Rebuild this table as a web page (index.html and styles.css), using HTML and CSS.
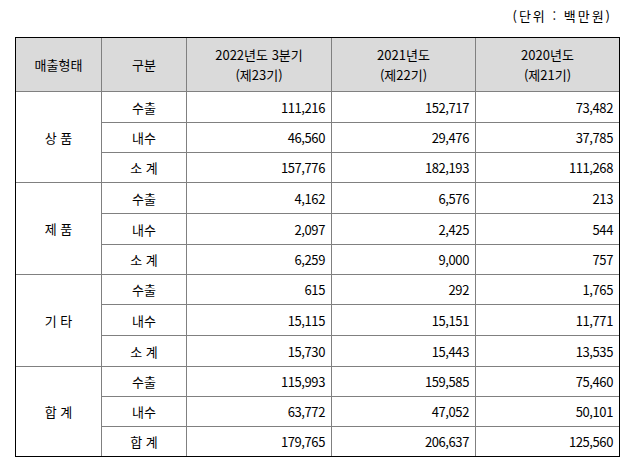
FILE: index.html
```html
<!DOCTYPE html>
<html lang="ko">
<head>
<meta charset="utf-8">
<link rel="stylesheet" href="styles.css">
</head>
<body>
<div class="page">
  <div class="unit">(단위 : 백만원)</div>
  <div class="sales">
    <div class="h">매출형태</div>
    <div class="h">구분</div>
    <div class="h">2022년도 3분기<br>(제23기)</div>
    <div class="h">2021년도<br>(제22기)</div>
    <div class="h">2020년도<br>(제21기)</div>

    <div class="grp">상 품</div>
    <div class="sub">수출</div><div class="n">111,216</div><div class="n">152,717</div><div class="n">73,482</div>
    <div class="sub">내수</div><div class="n">46,560</div><div class="n">29,476</div><div class="n">37,785</div>
    <div class="sub">소 계</div><div class="n">157,776</div><div class="n">182,193</div><div class="n">111,268</div>

    <div class="grp">제 품</div>
    <div class="sub">수출</div><div class="n">4,162</div><div class="n">6,576</div><div class="n">213</div>
    <div class="sub">내수</div><div class="n">2,097</div><div class="n">2,425</div><div class="n">544</div>
    <div class="sub">소 계</div><div class="n">6,259</div><div class="n">9,000</div><div class="n">757</div>

    <div class="grp">기 타</div>
    <div class="sub">수출</div><div class="n">615</div><div class="n">292</div><div class="n">1,765</div>
    <div class="sub">내수</div><div class="n">15,115</div><div class="n">15,151</div><div class="n">11,771</div>
    <div class="sub">소 계</div><div class="n">15,730</div><div class="n">15,443</div><div class="n">13,535</div>

    <div class="grp">합 계</div>
    <div class="sub">수출</div><div class="n">115,993</div><div class="n">159,585</div><div class="n">75,460</div>
    <div class="sub">내수</div><div class="n">63,772</div><div class="n">47,052</div><div class="n">50,101</div>
    <div class="sub">합 계</div><div class="n">179,765</div><div class="n">206,637</div><div class="n">125,560</div>
  </div>
</div>
</body>
</html>
```
FILE: styles.css
```css
html, body {
  margin: 0;
  padding: 0;
  background: #fff;
}
body {
  font-family: "Noto Sans CJK KR", "Noto Sans", sans-serif;
  font-size: 13px;
  color: #000;
}
.page {
  padding: 6px 13px 0 15px;
  width: 605px;
}
.unit {
  text-align: right;
  height: 20px;
  line-height: 20px;
  padding-right: 8px;
  margin-bottom: 11px;
  letter-spacing: 2px;
}
.sales {
  display: grid;
  grid-template-columns: 85px 84px 144px 143px 143px;
  grid-template-rows: 53px
    30px 29px 29px
    30px 30px 29px
    29px 30px 30px
    29px 29px 29px;
  gap: 1px;
  background: #808080;
  border: 1px solid #000;
  width: 603px;
}
.sales > div {
  background: #fff;
  display: flex;
  align-items: center;
  justify-content: flex-end;
  padding-right: 6px;
  letter-spacing: -0.4px;
}
.sales > .h {
  background: #dadada;
  justify-content: center;
  text-align: center;
  line-height: 20px;
  padding: 0;
  letter-spacing: 0;
}
.sales > .grp {
  grid-row: span 3;
  justify-content: center;
  padding: 0;
  letter-spacing: 0;
}
.sales > .sub {
  justify-content: center;
  padding: 0;
  letter-spacing: 0;
}
```
